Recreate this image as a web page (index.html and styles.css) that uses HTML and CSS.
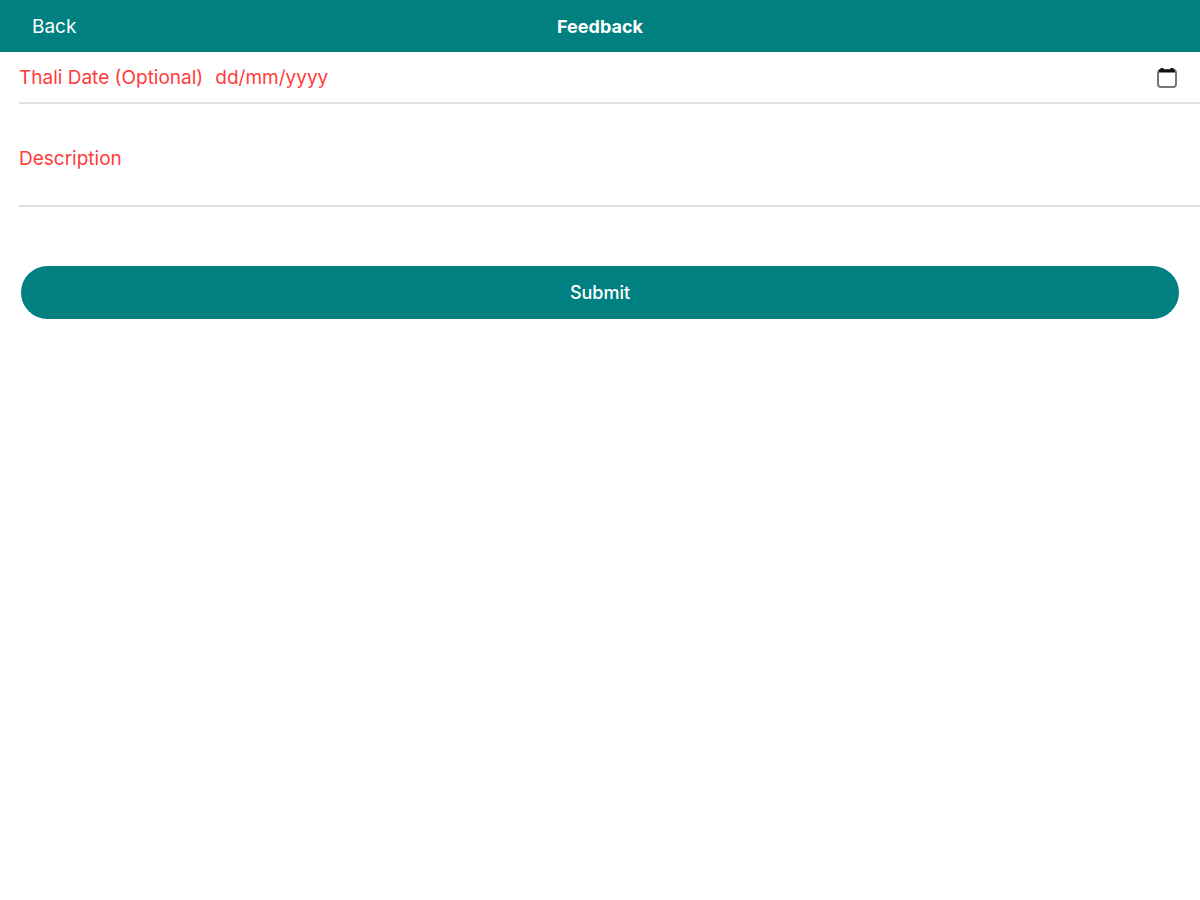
FILE: index.html
```html
<!DOCTYPE html>
<html lang="en-GB">
<head>
  <meta charset="UTF-8">
  <meta name="viewport" content="width=device-width, initial-scale=1">
  <title>Feedback</title>
  <link rel="stylesheet" href="styles.css">
</head>
<body>
  <header class="navbar">
    <a href="#" class="back">Back</a>
    <h1 class="title">Feedback</h1>
  </header>

  <form class="feedback-form">
    <div class="item date-item">
      <label for="thali-date">Thali Date (Optional)</label>
      <input type="text" id="thali-date" placeholder="dd/mm/yyyy">
      <button type="button" class="picker" aria-label="Choose date">
        <svg width="22" height="22" viewBox="0 0 22 22" aria-hidden="true">
          <rect x="2" y="3" width="18" height="17" rx="3" fill="none" stroke="#777" stroke-width="2"/>
          <path d="M3 4h16M6 1v3M16 1v3" fill="none" stroke="#111" stroke-width="3"/>
        </svg>
      </button>
    </div>

    <div class="item text-item">
      <label for="description">Description</label>
      <textarea id="description" rows="1"></textarea>
    </div>

    <button type="submit" class="submit">Submit</button>
  </form>
</body>
</html>
```
FILE: styles.css
```css
* { box-sizing: border-box; }
body { margin: 0; background: #fff; font-family: Inter, "Liberation Sans", sans-serif; font-size: 19px; line-height: 24px; }
input, textarea, button { font: inherit; }

.navbar { display: grid; grid-template-columns: 1fr auto 1fr; align-items: center; height: 52px; padding: 2px 32px 0; background: #008080; color: #fff; }
.back { color: #fff; text-decoration: none; }
.title { margin: 0; font-size: 18px; font-weight: 700; }

.item { display: flex; align-items: center; gap: 12px; margin-left: 19px; border-bottom: 2px solid #e0e0e0; color: #ff3b3b; }
.item input, .item textarea { flex: 1; min-width: 0; padding: 0; border: 0; outline: 0; background: none; color: inherit; resize: none; }
.item input::placeholder { color: inherit; opacity: 1; }
.date-item { height: 52px; padding: 1px 22px 0 0; }
.picker { display: flex; padding: 0; border: 0; background: none; }
.text-item { height: 103px; padding-top: 9px; }

.submit { display: block; width: calc(100% - 42px); height: 53px; margin: 59px 21px 0; border: 0; border-radius: 27px; background: #008080; color: #fff; font-size: 18px; font-weight: 500; }
```
